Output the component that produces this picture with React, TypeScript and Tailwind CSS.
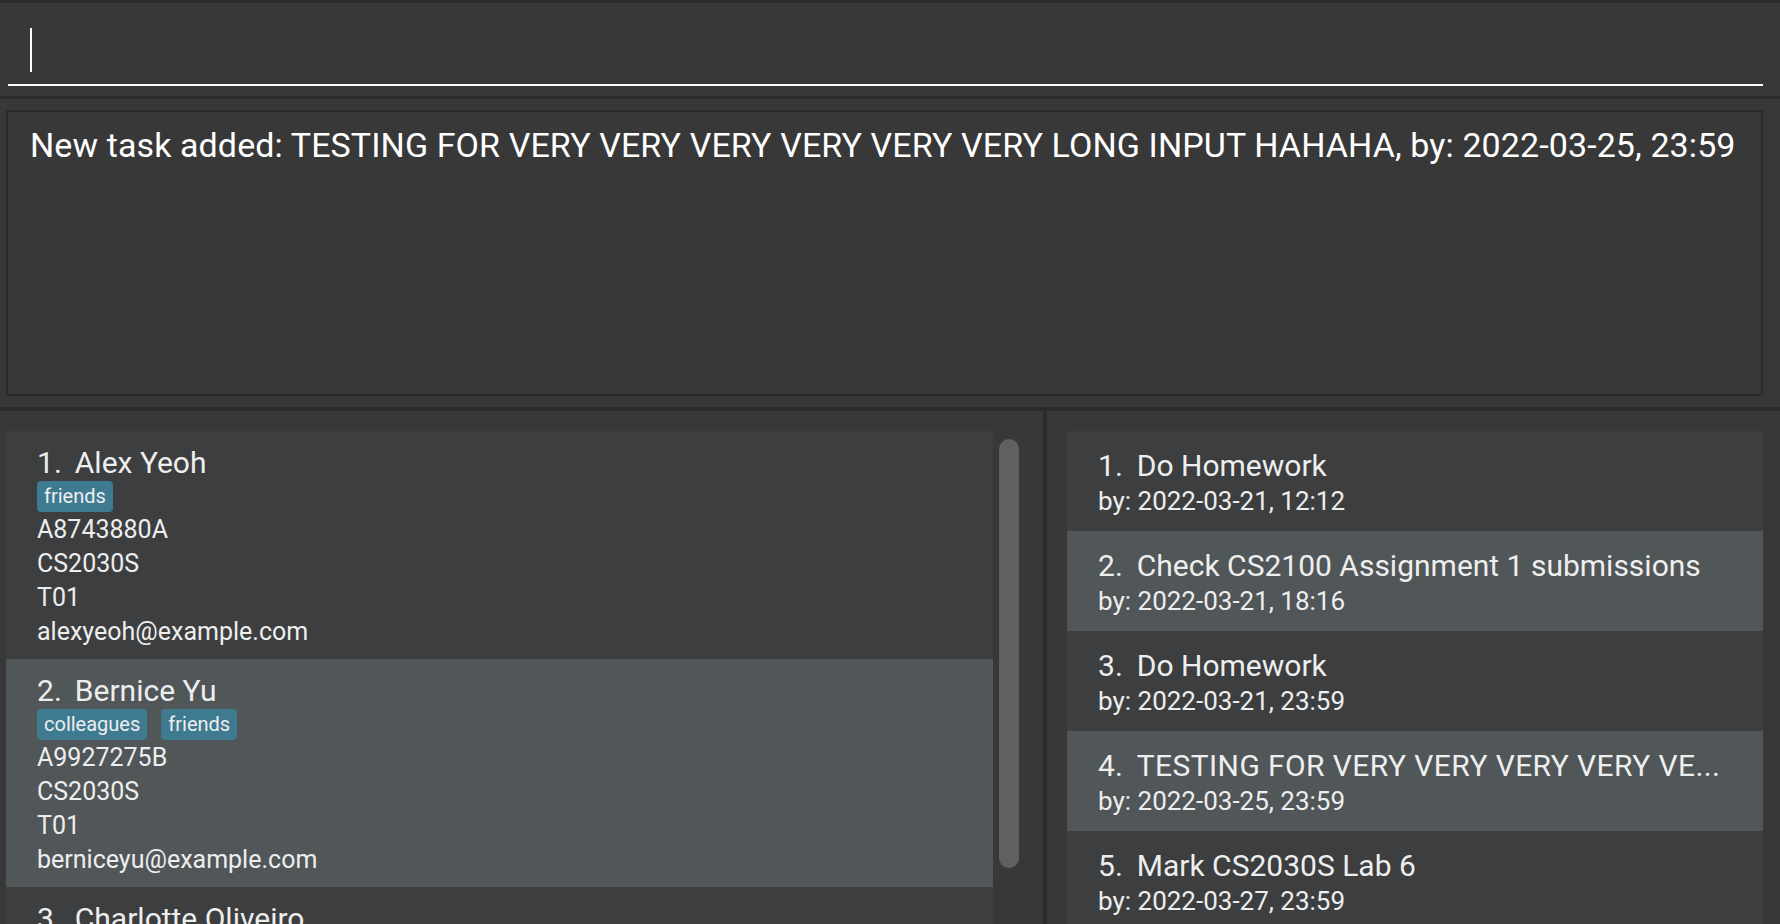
import React from 'react';

type Person = {
  name: string;
  tags: string[];
  id: string;
  module: string;
  group: string;
  email: string;
};

type Task = {
  title: string;
  by: string;
};

const people: Person[] = [
  { name: 'Alex Yeoh', tags: ['friends'], id: 'A8743880A', module: 'CS2030S', group: 'T01', email: 'alexyeoh@example.com' },
  { name: 'Bernice Yu', tags: ['colleagues', 'friends'], id: 'A9927275B', module: 'CS2030S', group: 'T01', email: 'berniceyu@example.com' },
  { name: 'Charlotte Oliveiro', tags: ['neighbours'], id: 'A0212345C', module: 'CS2030S', group: 'T02', email: 'charlotte@example.com' },
];

const tasks: Task[] = [
  { title: 'Do Homework', by: '2022-03-21, 12:12' },
  { title: 'Check CS2100 Assignment 1 submissions', by: '2022-03-21, 18:16' },
  { title: 'Do Homework', by: '2022-03-21, 23:59' },
  { title: 'TESTING FOR VERY VERY VERY VERY VE...', by: '2022-03-25, 23:59' },
  { title: 'Mark CS2030S Lab 6', by: '2022-03-27, 23:59' },
];

function PersonCard({ person, index, selected }: { person: Person; index: number; selected: boolean }) {
  return (
    <div className={`shrink-0 h-[228px] pl-[31px] pt-[15px] text-[#eeeeee] ${selected ? 'bg-[#515658]' : 'bg-[#3c3e40]'}`}>
      <div className="flex text-[30px] leading-[34px] whitespace-nowrap">
        <span className="mr-[13px]">{index + 1}.</span>
        <span>{person.name}</span>
      </div>
      <div className="mt-[1px] flex gap-[14px]">
        {person.tags.map((tag) => (
          <span key={tag} className="h-[31px] px-[7px] rounded-[4px] bg-[#3e7b91] text-[20px] leading-[31px] text-[#eeeeee]">
            {tag}
          </span>
        ))}
      </div>
      <div className="mt-[1px] text-[25px] leading-[34px]">
        <div>{person.id}</div>
        <div>{person.module}</div>
        <div>{person.group}</div>
        <div>{person.email}</div>
      </div>
    </div>
  );
}

function TaskCard({ task, index, selected }: { task: Task; index: number; selected: boolean }) {
  return (
    <div className={`shrink-0 h-[100px] pl-[31px] pt-[17px] text-[#eeeeee] ${selected ? 'bg-[#515658]' : 'bg-[#3c3e40]'}`}>
      <div className="flex text-[30px] leading-[36px] whitespace-nowrap">
        <span className="mr-[14px]">{index + 1}.</span>
        <span className={index === 3 ? 'tracking-[0.4px]' : ''}>{task.title}</span>
      </div>
      <div className="mt-[2px] text-[26px] leading-[30px] whitespace-nowrap">by: {task.by}</div>
    </div>
  );
}

export default function App() {
  return (
    <div className="w-[1780px] h-[924px] overflow-hidden bg-[#383838] flex flex-col font-['Roboto',sans-serif]">
      <div className="h-[3px] shrink-0 bg-[#2b2b2b]" />

      {/* Command box */}
      <div className="h-[93px] shrink-0 pl-[8px] pr-[17px] pt-[25px]">
        <div className="ml-[22px] w-[2px] h-[44px] bg-white" />
        <div className="mt-[12px] h-[2px] bg-white" />
      </div>

      <div className="h-[3px] shrink-0 bg-[#2b2b2b]" />

      {/* Result display */}
      <div className="h-[308px] shrink-0 pt-[11px] pl-[6px] pr-[17px]">
        <div className="h-[286px] border-2 border-[#2b2b2b] pl-[22px] pt-[16px]">
          <p className="text-[34px] leading-[34px] tracking-[0.1px] text-white whitespace-nowrap">
            New task added: TESTING FOR VERY VERY VERY VERY VERY VERY LONG INPUT HAHAHA, by: 2022-03-25, 23:59
          </p>
        </div>
      </div>

      <div className="h-[4px] shrink-0 bg-[#2b2b2b]" />

      {/* Lists */}
      <div className="flex-1 flex min-h-0">
        <div className="w-[1043px] shrink-0 flex pt-[20px] pl-[6px]">
          <div className="w-[987px] flex flex-col">
            {people.map((p, i) => (
              <PersonCard key={p.name} person={p} index={i} selected={i === 1} />
            ))}
          </div>
          <div className="flex-1 pl-[6px] pt-[8px]">
            <div className="w-[20px] h-[429px] rounded-[10px] bg-[#606060]" />
          </div>
        </div>

        <div className="w-[4px] shrink-0 bg-[#2b2b2b]" />

        <div className="flex-1 flex flex-col pt-[20px] pl-[20px] pr-[17px]">
          {tasks.map((t, i) => (
            <TaskCard key={i} task={t} index={i} selected={i % 2 === 1} />
          ))}
        </div>
      </div>
    </div>
  );
}
